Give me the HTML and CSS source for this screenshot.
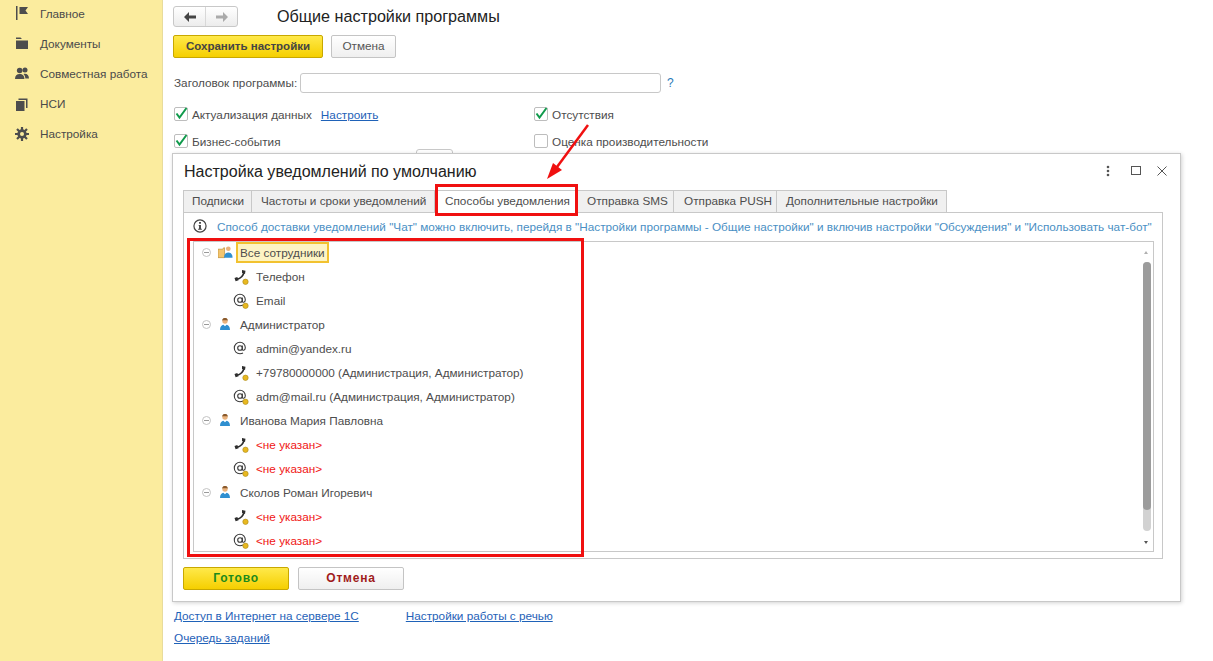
FILE: index.html
```html
<!DOCTYPE html>
<html lang="ru">
  <head>
    <meta charset="UTF-8" />
    <title>Настройка уведомлений</title>
    <link rel="stylesheet" href="styles.css">
  </head>
  <body>
    <svg class="defs" width="0" height="0">
      <symbol id="phone" viewBox="0 0 16 16">
        <path d="M11 3C10.500 6.500 7.500 9.500 3.500 10.500" fill="none" stroke="#2f2f2f" stroke-width="1.700" />
        <path d="M9 1l3.500.7-.5 3.300-3-1zM1.500 9l2.800-1 1.300 3.200-3 1.100z" fill="#2f2f2f" />
        <circle cx="12.500" cy="12.800" r="2.700" fill="#e8b820" stroke="#a98a1c" stroke-width=".6" />
      </symbol>
      <symbol id="at" viewBox="0 0 16 16">
        <circle cx="7" cy="7" r="2.300" fill="none" stroke="#3a3a3a" stroke-width="1.100" />
        <path d="M9.300 4.600v3.600c0 1.700 3 1.500 3-1.400C12.300 3.600 10 1.300 7 1.300S1.300 3.700 1.300 7 3.700 12.700 7 12.700c1.200 0 2.100-.2 3-.7" fill="none" stroke="#3a3a3a" stroke-width="1.100" />
        <circle cx="12.500" cy="12.800" r="2.700" fill="#e8b820" stroke="#a98a1c" stroke-width=".6" />
      </symbol>
      <symbol id="at-plain" viewBox="0 0 16 16">
        <circle cx="7" cy="7" r="2.300" fill="none" stroke="#3a3a3a" stroke-width="1.100" />
        <path d="M9.300 4.600v3.600c0 1.700 3 1.500 3-1.400C12.300 3.600 10 1.300 7 1.300S1.300 3.700 1.300 7 3.700 12.700 7 12.700c1.200 0 2.100-.2 3-.7" fill="none" stroke="#3a3a3a" stroke-width="1.100" />
      </symbol>
      <symbol id="user" viewBox="0 0 14 14">
        <circle cx="7" cy="4" r="2.700" fill="#e9b27c" />
        <path d="M4.200 3.500C4.400 1.600 5.500 1 7 1s2.600.6 2.800 2.500C8.500 3 5.500 3 4.200 3.500z" fill="#8a5a2c" />
        <path d="M2 13c0-3.300 1.600-5 3.400-5.200L7 9.300l1.600-1.500c1.800.2 3.400 1.900 3.400 5.200z" fill="#2f8fd0" />
      </symbol>
    </svg>

    <div class="app">
      <nav class="sidebar">
        <a class="nav-item">
          <svg width="14" height="14" viewBox="0 0 14 14"><path d="M1 0h1.500v14H1zM4.500 1H13L10.500 4.500 13 8H4.500z" fill="#4d4d4d" /></svg>
          Главное
        </a>
        <a class="nav-item">
          <svg width="14" height="14" viewBox="0 0 14 14"><path d="M1 1.500h4.500L7 3H1zM1 4.500h12V13H1z" fill="#4d4d4d" /></svg>
          Документы
        </a>
        <a class="nav-item">
          <svg width="14" height="14" viewBox="0 0 14 14"><circle cx="4.700" cy="4.500" r="2.800" fill="#4d4d4d" /><circle cx="10" cy="4" r="2.500" fill="#4d4d4d" /><path d="M0 13c0-3.500 1.800-5 4.700-5s4.700 1.500 4.700 5zM10.300 12.500c0-2-.6-3.500-1.800-4.600 3-.7 5.500.7 5.500 4.600z" fill="#4d4d4d" /></svg>
          Совместная работа
        </a>
        <a class="nav-item">
          <svg width="14" height="14" viewBox="0 0 14 14"><path d="M1 4h8.500v10H1z" fill="#4d4d4d" /><path d="M3.500 1.500h9V11H11V3H3.500z" fill="#4d4d4d" /></svg>
          НСИ
        </a>
        <a class="nav-item">
          <svg width="14" height="14" viewBox="0 0 14 14"><circle cx="7" cy="7" r="3.400" fill="none" stroke="#4d4d4d" stroke-width="2.600" /><path d="M7 0v14M0 7h14M2 2l10 10M12 2L2 12" stroke="#4d4d4d" stroke-width="2.200" /><circle cx="7" cy="7" r="2" fill="#fbec9e" /></svg>
          Настройка
        </a>
      </nav>

      <main class="content">
        <div class="head-row">
          <div class="history">
            <span class="history-btn"><svg width="12" height="10" viewBox="0 0 12 10"><path d="M5 0v3.500h7v3H5V10L0 5z" fill="#444" /></svg></span>
            <span class="history-btn"><svg width="12" height="10" viewBox="0 0 12 10"><path d="M7 0v3.500H0v3h7V10l5-5z" fill="#aaa" /></svg></span>
          </div>
          <h1 class="page-title">Общие настройки программы</h1>
        </div>
        <div class="actions">
          <button class="btn btn-primary">Сохранить настройки</button>
          <button class="btn">Отмена</button>
        </div>
        <div class="title-field">
          <label>Заголовок программы:</label>
          <input class="field" />
          <span class="help">?</span>
        </div>
        <div class="options">
          <div class="option"><span class="check on"><svg width="14" height="14" viewBox="0 0 14 14"><path d="M2.500 6.500l3 4L12.500 1" fill="none" stroke="#109a4c" stroke-width="2" /></svg></span>Актуализация данных <a class="link option-link">Настроить</a></div>
          <div class="option"><span class="check on"><svg width="14" height="14" viewBox="0 0 14 14"><path d="M2.500 6.500l3 4L12.500 1" fill="none" stroke="#109a4c" stroke-width="2" /></svg></span>Отсутствия</div>
          <div class="option"><span class="check on"><svg width="14" height="14" viewBox="0 0 14 14"><path d="M2.500 6.500l3 4L12.500 1" fill="none" stroke="#109a4c" stroke-width="2" /></svg></span>Бизнес-события</div>
          <div class="option"><span class="check"></span>Оценка производительности</div>
        </div>
        <div class="bottom-links">
          <div class="links-row"><a class="link">Доступ в Интернет на сервере 1С</a><a class="link">Настройки работы с речью</a></div>
          <div class="links-row"><a class="link">Очередь заданий</a></div>
        </div>
      </main>
    </div>

    <span class="peek-btn"></span>

    <section class="dialog">
      <header class="dialog-head">
        <h2 class="dialog-title">Настройка уведомлений по умолчанию</h2>
        <div class="window-btns">
          <svg class="btn-more" width="4" height="12" viewBox="0 0 4 12"><circle cx="2" cy="2" r="1.300" fill="#555" /><circle cx="2" cy="6" r="1.300" fill="#555" /><circle cx="2" cy="10" r="1.300" fill="#555" /></svg>
          <svg width="10" height="10" viewBox="0 0 10 10"><rect x=".5" y=".5" width="9" height="8" fill="none" stroke="#555" /></svg>
          <svg width="10" height="10" viewBox="0 0 10 10"><path d="M.5 .5l9 9M9.500 .5l-9 9" stroke="#555" /></svg>
        </div>
      </header>

      <div class="tabs">
        <span class="tab tab-1">Подписки</span>
        <span class="tab tab-2">Частоты и сроки уведомлений</span>
        <span class="tab tab-3 active">Способы уведомления</span>
        <span class="tab tab-4">Отправка SMS</span>
        <span class="tab tab-5">Отправка PUSH</span>
        <span class="tab tab-6">Дополнительные настройки</span>
      </div>

      <div class="tab-body">
        <div class="hint">
          <svg width="14" height="14" viewBox="0 0 15 15"><circle cx="7.500" cy="7.500" r="6.500" fill="#fff" stroke="#444" stroke-width="1.300" /><path d="M6.500 3.300h2v1.800h-2zM6 6.300h2.500v4.200h1v1h-4v-1h1V7.300H6z" fill="#444" /></svg>
          <span>Способ доставки уведомлений "Чат" можно включить, перейдя в "Настройки программы - Общие настройки" и включив настройки "Обсуждения" и "Использовать чат-бот"</span>
        </div>
        <div class="tree">
          <div class="tree-list">
            <div class="row group"><i class="toggle"></i><svg class="row-icon" width="15" height="14" viewBox="0 0 16 14"><path d="M0 4h5l1-1.500h1V13H0z" fill="#f3c56e" stroke="#b98a34" stroke-width=".7" /><circle cx="11" cy="3.500" r="2.500" fill="#e9b27c" /><path d="M6.500 13c0-4 2-5.500 4.500-5.500s4.500 1.500 4.500 5.500z" fill="#2f8fd0" /></svg><span class="selected">Все сотрудники</span></div>
            <div class="row item"><svg class="row-icon" width="16" height="16"><use href="#phone" /></svg>Телефон</div>
            <div class="row item"><svg class="row-icon" width="16" height="16"><use href="#at" /></svg>Email</div>
            <div class="row group"><i class="toggle"></i><svg class="row-icon" width="14" height="14"><use href="#user" /></svg>Администратор</div>
            <div class="row item"><svg class="row-icon" width="16" height="16"><use href="#at-plain" /></svg>admin@yandex.ru</div>
            <div class="row item"><svg class="row-icon" width="16" height="16"><use href="#phone" /></svg>+79780000000 (Администрация, Администратор)</div>
            <div class="row item"><svg class="row-icon" width="16" height="16"><use href="#at" /></svg>adm@mail.ru (Администрация, Администратор)</div>
            <div class="row group"><i class="toggle"></i><svg class="row-icon" width="14" height="14"><use href="#user" /></svg>Иванова Мария Павловна</div>
            <div class="row item"><svg class="row-icon" width="16" height="16"><use href="#phone" /></svg><span class="missing">&lt;не указан&gt;</span></div>
            <div class="row item"><svg class="row-icon" width="16" height="16"><use href="#at" /></svg><span class="missing">&lt;не указан&gt;</span></div>
            <div class="row group"><i class="toggle"></i><svg class="row-icon" width="14" height="14"><use href="#user" /></svg>Сколов Роман Игоревич</div>
            <div class="row item"><svg class="row-icon" width="16" height="16"><use href="#phone" /></svg><span class="missing">&lt;не указан&gt;</span></div>
            <div class="row item"><svg class="row-icon" width="16" height="16"><use href="#at" /></svg><span class="missing">&lt;не указан&gt;</span></div>
          </div>
          <div class="scrollbar">
            <i class="arrow-up"></i>
            <div class="track"><div class="thumb"></div></div>
            <i class="arrow-down"></i>
          </div>
        </div>
      </div>

      <footer class="dialog-foot">
        <button class="btn-done">Готово</button>
        <button class="btn-cancel">Отмена</button>
      </footer>
    </section>

    <!-- пометки поверх скриншота -->
    <div class="mark mark-tab"></div>
    <div class="mark mark-tree"></div>
    <svg class="mark-arrow" width="50" height="66" viewBox="0 0 50 66">
      <path d="M43 2L12 44" stroke="#f01010" stroke-width="2.500" />
      <path d="M2 56L17 47 8 40z" fill="#f01010" />
    </svg>
  </body>
</html>
```

FILE: styles.css
```css
* {
  box-sizing: border-box;
}
html,
body {
  margin: 0;
  height: 661px;
  overflow: hidden;
}
body {
  position: relative;
  font-family: "Liberation Sans", Arial, sans-serif;
  font-size: 11.75px;
  color: #4d4d4d;
  background: #fff;
}
.defs {
  position: absolute;
}
.app {
  display: flex;
  height: 661px;
}

/* левая панель */
.sidebar {
  width: 163px;
  flex: none;
  background: #fbec9e;
  border-right: 1px solid #e8dc9c;
}
.nav-item {
  display: flex;
  align-items: center;
  gap: 11px;
  height: 30px;
  margin-bottom: 0.2px;
  padding-left: 15px;
  color: #4a4a4a;
}
.nav-item:first-child {
  margin-top: -2px;
}

/* основная форма */
.content {
  flex: 1;
  padding: 6px 0 0 10px;
}
.head-row {
  display: flex;
  align-items: center;
  height: 21px;
}
.history {
  display: flex;
  width: 65px;
  height: 21px;
  border: 1px solid #c8c8c8;
  border-radius: 3px;
  background: linear-gradient(#fff, #ececec);
}
.history-btn {
  flex: 1;
  display: flex;
  align-items: center;
  justify-content: center;
}
.history-btn + .history-btn {
  border-left: 1px solid #d8d8d8;
}
.page-title {
  margin: 0 0 0 39px;
  font-size: 16.15px;
  font-weight: normal;
  color: #222;
}
.actions {
  display: flex;
  gap: 8px;
  margin-top: 8px;
}
.btn {
  width: 65px;
  height: 23px;
  padding: 0 0 2px;
  font: 11.75px "Liberation Sans", Arial, sans-serif;
  color: #555;
  border: 1px solid #c4c4c4;
  border-radius: 2px;
  background: linear-gradient(#fff, #efefef);
}
.btn-primary {
  width: 150px;
  font-size: 11.5px;
  font-weight: bold;
  color: #444;
  border-color: #c8a800;
  background: linear-gradient(#ffe94a, #f5cf00);
}
.title-field {
  display: flex;
  align-items: center;
  margin-top: 14px;
  margin-left: 1px;
  height: 21px;
}
.title-field label {
  width: 126px;
}
.field {
  width: 361px;
  height: 20px;
  border: 1px solid #c8c8c8;
  border-radius: 3px;
  background: #fff;
}
.help {
  margin-left: 6px;
  font-size: 12px;
  color: #2a7ab8;
}
.options {
  display: grid;
  grid-template-columns: 360px 1fr;
  row-gap: 13px;
  margin-top: 14px;
  margin-left: 1px;
}
.option {
  display: flex;
  align-items: center;
  height: 14px;
}
.check {
  display: flex;
  align-items: center;
  justify-content: center;
  width: 14px;
  height: 14px;
  margin-right: 4px;
  border: 1px solid #bdbdbd;
  border-radius: 2px;
  background: #fff;
}
.check svg {
  flex: none;
}
.link {
  color: #1f62b8;
  text-decoration: underline;
}
.option-link {
  margin-left: 9px;
}
.bottom-links {
  margin-top: 456px;
  margin-left: 1px;
}
.links-row {
  display: flex;
  gap: 47px;
  height: 22px;
  align-items: center;
}
.peek-btn {
  position: absolute;
  left: 416px;
  top: 149px;
  width: 37px;
  height: 8px;
  border: 1px solid #c8c8c8;
  border-radius: 3px;
}

/* окно настройки */
.dialog {
  position: absolute;
  left: 172px;
  top: 153px;
  width: 1009px;
  height: 449px;
  padding: 0 10px;
  background: #fff;
  border: 1px solid #c8c8c8;
  box-shadow: 1px 1px 4px rgba(0, 0, 0, 0.18);
}
.dialog-head {
  display: flex;
  align-items: center;
  justify-content: space-between;
  height: 36px;
}
.dialog-title {
  margin: 0 0 2px 1px;
  font-size: 16.05px;
  font-weight: normal;
  color: #222;
}
.window-btns {
  display: flex;
  align-items: center;
  gap: 16px;
  margin-right: 3px;
  margin-top: -2px;
}
.btn-more {
  margin-right: 5px;
}
.tabs {
  display: flex;
  height: 23px;
}
.tab {
  display: flex;
  align-items: center;
  padding: 0 0 2px 9px;
  background: #f0f0f0;
  border: 1px solid #c8c8c8;
  border-left: 0;
  color: #4d4d4d;
}
.tab-1 {
  width: 69px;
  padding-left: 8px;
  border-left: 1px solid #c8c8c8;
}
.tab-2 {
  width: 183px;
}
.tab-3 {
  width: 142px;
  padding-left: 10px;
}
.tab-4 {
  width: 97px;
  padding-left: 10px;
}
.tab-5 {
  width: 103px;
  padding-left: 10px;
}
.tab-6 {
  width: 170px;
}
.tab.active {
  background: #fff;
  border-bottom-color: #fff;
}
.tab-body {
  width: 980px;
  height: 347px;
  margin-top: -1px;
  padding: 4px 9px 0 9px;
  border: 1px solid #c8c8c8;
}
.hint {
  display: flex;
  align-items: center;
  gap: 10px;
  height: 18px;
  font-size: 11.76px;
  white-space: nowrap;
  color: #4a8fc4;
}
.hint svg {
  flex: none;
}
.tree {
  display: flex;
  width: 961px;
  height: 311px;
  margin-top: 6px;
  border: 1px solid #c8c8c8;
  overflow: hidden;
}
.tree-list {
  flex: 1;
  margin-top: -2px;
}
.row {
  display: flex;
  align-items: center;
  height: 24px;
  white-space: nowrap;
}
.row.group {
  padding-left: 8px;
}
.row.item {
  padding-left: 39px;
}
.toggle {
  flex: none;
  position: relative;
  width: 9px;
  height: 9px;
  margin-right: 7px;
  border: 1px solid #c4c4c4;
  border-radius: 50%;
}
.toggle::after {
  content: "";
  position: absolute;
  left: 1px;
  top: 3px;
  width: 5px;
  height: 1px;
  background: #9a9a9a;
}
.row.group .row-icon {
  margin-right: 8px;
}
.row.group .row-icon + .selected {
  margin-left: -5px;
}
.row.item .row-icon {
  margin-top: 2px;
  margin-right: 7px;
}
.row-icon {
  flex: none;
}
.selected {
  padding: 2px;
  background: #fdf4c4;
  border: 2px solid #f2c230;
}
.missing {
  color: #f01414;
}
.scrollbar {
  flex: none;
  position: relative;
  display: flex;
  flex-direction: column;
  align-items: center;
  width: 13px;
  padding-top: 20px;
}
.track {
  width: 8px;
  height: 269px;
  border-radius: 4px;
  background: #d2d2d2;
}
.thumb {
  height: 248px;
  border-radius: 4px;
  background: #9c9c9c;
}
.arrow-up,
.arrow-down {
  position: absolute;
  left: 4px;
  width: 0;
  height: 0;
  border-left: 2px solid transparent;
  border-right: 2px solid transparent;
}
.arrow-up {
  top: 9px;
  border-bottom: 3px solid #b0b0b0;
}
.arrow-down {
  bottom: 7px;
  border-top: 3px solid #555;
}
.dialog-foot {
  display: flex;
  gap: 9px;
  margin-top: 8px;
}
.btn-done,
.btn-cancel {
  width: 106px;
  height: 23px;
  padding: 0 0 2px;
  font: bold 12px "Liberation Sans", Arial, sans-serif;
  letter-spacing: 0.8px;
  border-radius: 2px;
}
.btn-done {
  color: #1c8a1c;
  border: 1px solid #c8a800;
  background: linear-gradient(#ffe94a, #f5cf00);
}
.btn-cancel {
  color: #a01c1c;
  border: 1px solid #c4c4c4;
  background: linear-gradient(#fff, #efefef);
}

/* красные рамки и стрелка */
.mark {
  position: absolute;
  border: 3px solid #f01010;
}
.mark-tab {
  left: 435px;
  top: 184px;
  width: 143px;
  height: 32px;
}
.mark-tree {
  left: 187px;
  top: 238px;
  width: 397px;
  height: 319px;
}
.mark-arrow {
  position: absolute;
  left: 545px;
  top: 123px;
}
```
